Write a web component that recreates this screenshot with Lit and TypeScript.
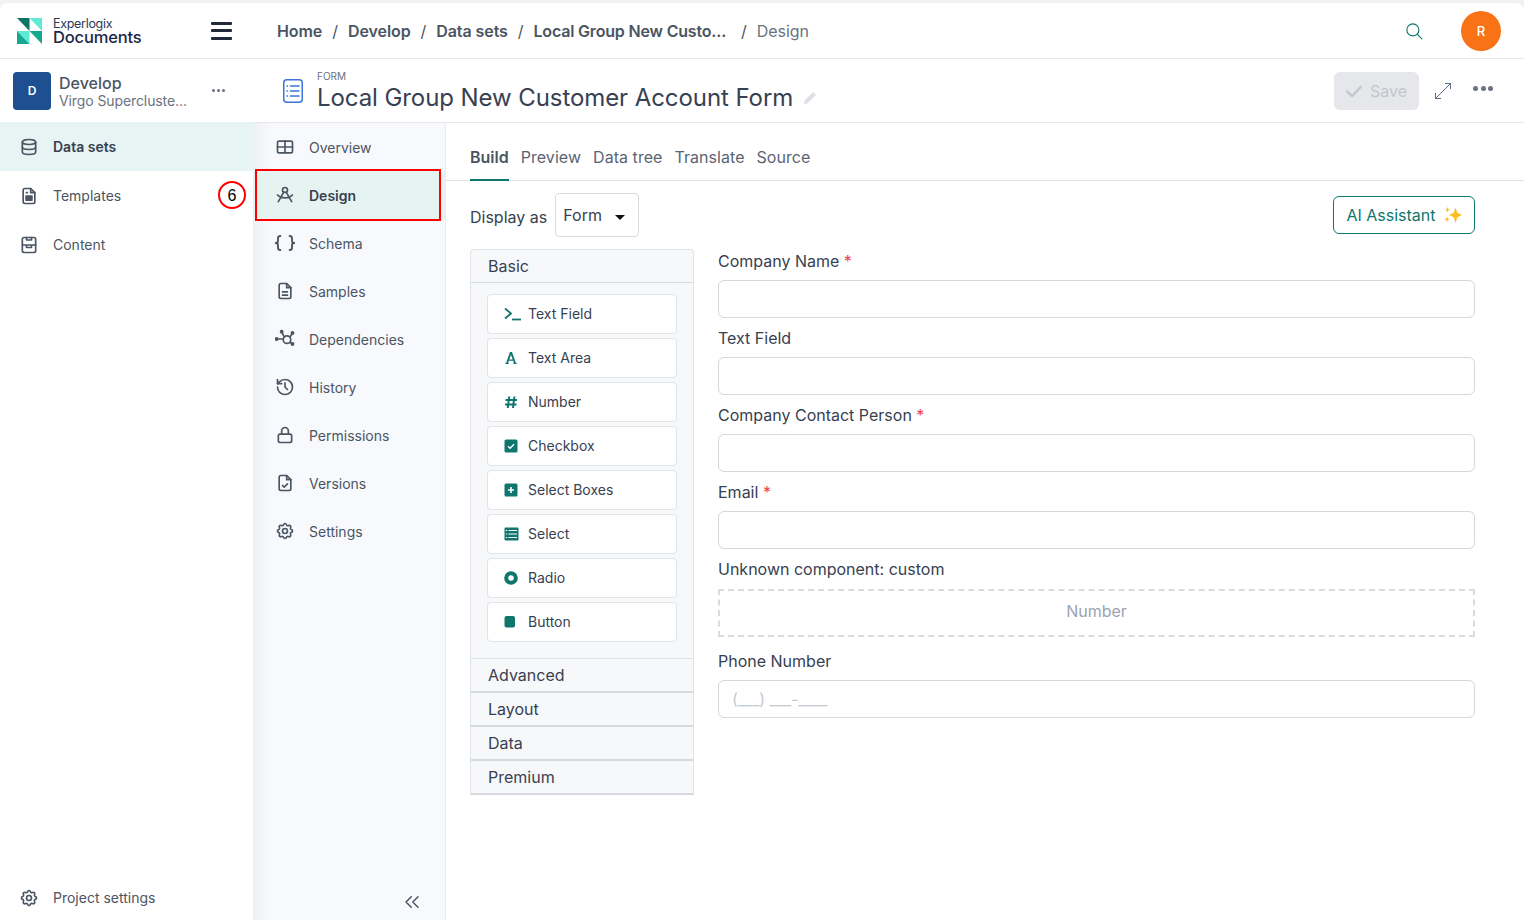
import { LitElement, html, css, svg } from "lit";
import { customElement } from "lit/decorators.js";

const I = (body: unknown, size = 20, sw = 2) => html`<svg width=${size} height=${size} viewBox="0 0 24 24" fill="none" stroke="currentColor" stroke-width=${sw} stroke-linecap="round" stroke-linejoin="round">${body}</svg>`;

const icons = {
  db: svg`<ellipse cx="12" cy="6" rx="8" ry="3"/><path d="M4 6v12c0 1.700 3.600 3 8 3s8-1.300 8-3V6"/><path d="M4 12c0 1.700 3.600 3 8 3s8-1.300 8-3"/>`,
  tpl: svg`<path d="M14 3H7a2 2 0 0 0-2 2v14a2 2 0 0 0 2 2h10a2 2 0 0 0 2-2V8z"/><path d="M14 3v5h5"/><path d="M9 8h1"/><rect x="8.500" y="12" width="7" height="5" fill="currentColor"/>`,
  content: svg`<rect x="4" y="3" width="16" height="18" rx="2"/><path d="M4 12h16M9 3v3h6V3M9 12v3h6v-3"/>`,
  gear: svg`<path d="M10.300 4.300c.4-1.800 3-1.800 3.400 0a1.700 1.700 0 0 0 2.600 1.100c1.500-.9 3.300.8 2.400 2.400a1.700 1.700 0 0 0 1 2.500c1.800.4 1.800 3 0 3.400a1.700 1.700 0 0 0-1 2.600c.9 1.500-.9 3.300-2.400 2.400a1.700 1.700 0 0 0-2.600 1c-.4 1.800-3 1.800-3.400 0a1.700 1.700 0 0 0-2.600-1c-1.500.9-3.300-.9-2.400-2.400a1.700 1.700 0 0 0-1-2.600c-1.800-.4-1.800-3 0-3.400a1.700 1.700 0 0 0 1-2.500c-.9-1.600.9-3.300 2.400-2.400a1.700 1.700 0 0 0 2.600-1.100z"/><circle cx="12" cy="12" r="3"/>`,
  overview: svg`<rect x="3" y="5" width="18" height="14" rx="2"/><path d="M3 12h18M12 5v14"/>`,
  design: svg`<circle cx="12" cy="6" r="3"/><path d="M10.500 8.500 4 20M13.500 8.500 20 20M3 12c4 4.500 14 4.500 18 0"/>`,
  schema: svg`<g transform="translate(-1.440 -1.440) scale(1.120)"><path d="M7 4.500c-2 0-2.500 1-2.500 2.500v2.500c0 1.500-1 2.500-2.500 2.500 1.500 0 2.500 1 2.500 2.500V17c0 1.500.5 2.500 2.500 2.500M17 4.500c2 0 2.500 1 2.500 2.500v2.500c0 1.500 1 2.500 2.500 2.500-1.500 0-2.500 1-2.500 2.500V17c0 1.500-.5 2.500-2.500 2.500"/></g>`,
  samples: svg`<path d="M14 3H7a2 2 0 0 0-2 2v14a2 2 0 0 0 2 2h10a2 2 0 0 0 2-2V8z"/><path d="M14 3v5h5M9 13h6M9 17h6"/>`,
  deps: svg`<circle cx="14.400" cy="12.800" r="4.500"/><path d="M2 12h8M11 9.500 8 3.500M18 9.500 21 5M18 16 21 18"/><circle cx="8" cy="3.200" r="1.300" fill="currentColor"/><circle cx="21" cy="4.800" r="1.300" fill="currentColor"/><circle cx="21" cy="18" r="1.300" fill="currentColor"/><circle cx="2" cy="12" r="1.300" fill="currentColor"/>`,
  history: svg`<path d="M3 12a9 9 0 1 0 9-9 9.750 9.750 0 0 0-6.740 2.740L3 8"/><path d="M3 3v5h5"/><path d="M12 7v5l3 3"/>`,
  lock: svg`<rect x="4" y="11" width="16" height="10" rx="2"/><path d="M8 11V7a4 4 0 0 1 8 0v4"/>`,
  versions: svg`<path d="M14 3H7a2 2 0 0 0-2 2v14a2 2 0 0 0 2 2h10a2 2 0 0 0 2-2V8z"/><path d="M14 3v5h5M9 15l2 2 4-4"/>`,
};

interface NavItem { icon: keyof typeof icons; label: string; active?: boolean }
const mainNav: NavItem[] = [
  { icon: "db", label: "Data sets", active: true },
  { icon: "tpl", label: "Templates" },
  { icon: "content", label: "Content" },
];
const subNav: NavItem[] = [
  { icon: "overview", label: "Overview" },
  { icon: "design", label: "Design", active: true },
  { icon: "schema", label: "Schema" },
  { icon: "samples", label: "Samples" },
  { icon: "deps", label: "Dependencies" },
  { icon: "history", label: "History" },
  { icon: "lock", label: "Permissions" },
  { icon: "versions", label: "Versions" },
  { icon: "gear", label: "Settings" },
];

const G = "#0f766e";
const palette = [
  { label: "Text Field", icon: html`<svg width="18" height="14" viewBox="0 0 18 14" fill="none" stroke=${G} stroke-width="1.800"><path d="M1 1.500 7 6.500 1 11.500"/><path d="M8 12.500h9"/></svg>` },
  { label: "Text Area", icon: html`<svg width="14" height="14" viewBox="0 0 14 14" fill=${G}><path d="M6 1h2l4 11.200 1 .3v.5H9v-.5l1-.3-.8-2.400H4.800L4 12.200l1 .3v.5H1v-.5l1-.3zM5.300 8.500h3.400L7 3.800z" fill-rule="evenodd"/></svg>` },
  { label: "Number", icon: html`<svg width="14" height="14" viewBox="0 0 14 14" fill="none" stroke=${G} stroke-width="2"><path d="M5.200 1.500 3.800 13M10.400 1.500 9 13M1.500 5h11.500M1 9.500h11.500"/></svg>` },
  { label: "Checkbox", icon: html`<svg width="14" height="14" viewBox="0 0 14 14"><rect x="0.500" y="0.500" width="13" height="13" rx="1.500" fill=${G}/><path d="M4 7.200 6.100 9.200l3.900-4" fill="none" stroke="#fff" stroke-width="1.400"/></svg>` },
  { label: "Select Boxes", icon: html`<svg width="14" height="14" viewBox="0 0 14 14"><rect x="0.500" y="0.500" width="13" height="13" rx="1.500" fill=${G}/><path d="M7 4v6M4 7h6" stroke="#fff" stroke-width="1.600"/></svg>` },
  { label: "Select", icon: html`<svg width="15" height="14" viewBox="0 0 15 14"><rect x="0.500" y="0.500" width="14" height="13" rx="1.200" fill=${G}/><path d="M4.500 3.500h8.500M4.500 7h8.500M4.500 10.500h8.500M1.800 3.500h1.500M1.800 7h1.500M1.800 10.500h1.500" stroke="#fff" stroke-width="1"/></svg>` },
  { label: "Radio", icon: html`<svg width="14" height="14" viewBox="0 0 14 14"><circle cx="7" cy="7" r="4.800" fill="#fff" stroke=${G} stroke-width="4"/></svg>` },
  { label: "Button", icon: html`<svg width="14" height="14" viewBox="0 0 14 14"><rect x="0.500" y="1" width="10.500" height="11.500" rx="2" fill=${G}/></svg>` },
];

const fields = [
  { label: "Company Name", req: true },
  { label: "Text Field" },
  { label: "Company Contact Person", req: true },
  { label: "Email", req: true },
];

@customElement("app-root")
export class AppRoot extends LitElement {
  static styles = css`
    :host { display: block; width: 1524px; height: 920px; overflow: hidden; background: #f1f2f4; font-family: Inter, "Liberation Sans", sans-serif; color: #374151; }
    * { box-sizing: border-box; }
    .shell { margin-top: 3px; height: 917px; background: #fff; border-radius: 8px 8px 0 0; display: grid; grid-template-columns: 253px 1fr; overflow: hidden; }
    .side { display: flex; flex-direction: column; background: #fff; position: relative; height: 917px; }
    .brand { height: 56px; border-bottom: 1px solid #e5e7eb; display: flex; align-items: center; padding: 0 21px 0 17px; }
    .brand-text { margin-left: 11px; display: flex; flex-direction: column; flex: 1; }
    .brand-a { font-size: 12.500px; line-height: 13px; letter-spacing: -0.300px; color: #2c3858; }
    .brand-b { font-size: 16.500px; line-height: 15px; font-weight: 500; letter-spacing: -0.150px; color: #1c2747; }
    .burger { width: 21px; height: 18px; display: flex; flex-direction: column; justify-content: space-between; }
    .burger i { display: block; height: 3px; background: #1f2937; border-radius: 1px; }
    .proj { height: 64px; margin-bottom: -1px; border-bottom: 1px solid #e9ebef; display: flex; align-items: center; padding: 0 13px; }
    .avatar { width: 38px; height: 38px; background: #1d4f91; border-radius: 4px; color: #fff; font-size: 12px; font-weight: 600; display: grid; place-items: center; }
    .proj-text { margin-left: 8px; flex: 1; display: flex; flex-direction: column; }
    .proj-a { font-size: 16px; line-height: 19px; font-weight: 500; color: #4b5563; margin: 1px 0 -1px; }
    .proj-b { font-size: 14px; line-height: 17px; color: #6b7280; letter-spacing: -0.100px; }
    .dots { display: flex; gap: 2px; margin-right: 15px; }
    .dots i { width: 3px; height: 3px; border-radius: 50%; background: #6b7280; display: block; }
    .nav { flex: 1; display: flex; flex-direction: column; }
    .nav a { height: 49px; display: flex; align-items: center; padding-left: 19px; gap: 14px; font-size: 14px; color: #4b5563; }
    .nav a.on { background: #e6f4f3; font-weight: 600; color: #374151; }
    .nav svg, .bottom svg { color: #4b5563; flex: none; }
    .bottom { height: 45px; display: flex; align-items: center; padding: 0 0 0 19px; gap: 14px; font-size: 14px; color: #4b5563; }
    .mark { position: absolute; left: 218px; top: 178px; width: 28px; height: 28px; border: 2px solid #f00; border-radius: 50%; display: grid; place-items: center; padding-top: 1px; font-size: 16px; color: #000; background: #fff; font-family: "Liberation Sans", sans-serif; }

    .right { display: flex; flex-direction: column; min-width: 0; height: 917px; }
    .crumbs { height: 56px; border-bottom: 1px solid #e5e7eb; display: flex; align-items: center; padding: 0 23px 0 24px; font-size: 16px; color: #4b5563; letter-spacing: -0.080px; }
    .crumbs b { font-weight: 600; }
    .crumbs b.long { letter-spacing: -0.180px; }
    .crumbs .sep { margin: 0 10px; font-weight: 400; color: #4b5563; }
    .crumbs .sep.wide { margin-left: 15px; }
    .crumbs .last { font-weight: 400; color: #6b7280; }
    .crumbs .spacer { flex: 1; }
    .search { color: #0f766e; margin-right: 38px; display: flex; }
    .user { width: 40px; height: 40px; border-radius: 50%; background: #f97316; color: #fff; font-size: 13px; font-weight: 500; display: grid; place-items: center; letter-spacing: 0; }
    .title-bar { height: 64px; border-bottom: 1px solid #e5e7eb; display: flex; align-items: center; padding: 0 31px 0 30px; }
    .form-ico { color: #3b74d8; display: flex; margin-right: 14px; }
    .title-box { display: flex; flex-direction: column; padding-top: 2px; }
    .kicker { font-size: 10px; line-height: 12px; color: #6b7280; margin-top: -2px; }
    .title { font-size: 24px; line-height: 28px; color: #374151; display: flex; align-items: center; gap: 10px; margin-top: 2px; letter-spacing: -0.080px; }
    .pencil { color: #dcdfe3; display: flex; }
    .title-spacer { flex: 1; }
    .save { width: 85px; height: 38px; background: #e5e7eb; border-radius: 6px; color: #c3c7cd; display: flex; align-items: center; justify-content: center; gap: 7px; font-size: 16px; margin-right: 16px; padding-right: 1px; }
    .expand { color: #5b6b85; display: flex; margin-right: 22px; }
    .more { display: flex; gap: 2.500px; margin-top: -4px; }
    .more i { width: 5px; height: 5px; border-radius: 50%; background: #6b7280; display: block; }

    .body { flex: 1; display: grid; grid-template-columns: 193px 1fr; min-height: 0; }
    .sub { position: relative; background: linear-gradient(90deg, #eef0f4 0, #f8f9fd 18px); border-right: 1px solid #e9ebf0; display: flex; flex-direction: column; }
    .sub-list { flex: 1; display: flex; flex-direction: column; }
    .sub-list a { height: 48px; display: flex; align-items: center; padding-left: 22px; gap: 14px; font-size: 14px; color: #4b5563; flex: none; }
    .sub-list a.on { background: #e6f4f1; font-weight: 600; color: #374151; }
    .sub-list svg { color: #4b5563; flex: none; }
    .redbox { position: absolute; left: 2px; top: 46px; width: 186px; height: 52px; border: 2px solid #f00; pointer-events: none; }
    .collapse { height: 36px; display: flex; justify-content: flex-end; align-items: center; padding-right: 24px; color: #4b5563; flex: none; }

    .main { display: flex; flex-direction: column; min-width: 0; }
    .tabs { height: 58px; border-bottom: 1px solid #e0e3e8; display: flex; align-items: flex-end; padding-left: 24px; gap: 12px; flex: none; }
    .tabs span { height: 46px; line-height: 24px; padding-top: 11px; font-size: 16px; color: #5b6472; letter-spacing: 0.050px; }
    .tabs .on { font-weight: 600; color: #4b5563; border-bottom: 2px solid #0f766e; margin-bottom: -1px; height: 47px; letter-spacing: 0; }
    .work { padding: 12px 49px 0 24px; display: flex; flex-direction: column; }
    .bar { display: flex; align-items: center; justify-content: space-between; height: 44px; }
    .disp { display: flex; align-items: center; gap: 8px; font-size: 16px; color: #374151; }
    .disp-label { margin-top: 4px; }
    .sel { width: 84px; height: 44px; border: 1px solid #d8dbe0; border-radius: 4px; display: flex; align-items: center; padding: 0 13px 0 7px; justify-content: space-between; color: #374151; }
    .caret { width: 0; height: 0; border-left: 5px solid transparent; border-right: 5px solid transparent; border-top: 5px solid #111; margin-top: 5px; }
    .ai { width: 142px; height: 38px; border: 1px solid #0f766e; border-radius: 6px; color: #0f766e; display: flex; align-items: center; justify-content: center; gap: 8px; font-size: 16px; background: #fff; }
    .cols { display: grid; grid-template-columns: 224px 1fr; gap: 24px; margin-top: 12px; }
    .panel { border: 1px solid #dfe2e7; border-bottom: 0; border-radius: 4px 4px 0 0; background: #f7f8fa; align-self: start; width: 224px; }
    .head { height: 34px; line-height: 33px; padding-left: 17px; font-size: 16px; color: #374151; background: #f7f8fa; border-bottom: 2px solid #d6d9df; }
    .panel .head:first-child { height: 33px; border-bottom-width: 1px; border-radius: 4px 4px 0 0; }
    .items { padding: 11px 16px 16px; display: flex; flex-direction: column; gap: 4px; border-bottom: 1px solid #dfe2e7; }
    .item { height: 40px; background: #fff; border: 1px solid #e0e3e8; border-radius: 4px; display: flex; align-items: center; padding-left: 16px; font-size: 14px; color: #374151; }
    .item-ico { width: 24px; display: flex; align-items: center; flex: none; }
    .item-txt { margin-top: -1px; }
    .form { display: flex; flex-direction: column; }
    .label { font-size: 16px; line-height: 24px; height: 31px; color: #374151; }
    .label.tall { height: 32px; }
    .req { color: #ef4444; }
    .input { height: 38px; border: 1px solid #d5d8de; border-radius: 6px; background: #fff; margin-bottom: 8px; font-size: 16px; color: #c4c9d2; display: flex; align-items: center; padding-left: 13px; letter-spacing: -0.100px; }
    .drop { height: 48px; border: 2px dashed #d8dbdf; display: grid; place-items: center; font-size: 16px; color: #9ca3af; margin-bottom: 12px; padding-bottom: 4px; }
  `;

  render() {
    return html`
      <div class="shell">
        <aside class="side">
          <div class="brand">
            <svg width="25" height="26" viewBox="0 0 25 26">
              <polygon points="0,0 12.500,0 12.500,13" fill="#0b7563"/>
              <polygon points="12.500,0 25,0 25,13" fill="#5eead4"/>
              <polygon points="0,13 12.500,13 12.500,26" fill="#5eead4"/>
              <polygon points="0,13 0,26 12.500,26" fill="#14a88f"/>
              <polygon points="12.500,13 25,13 25,26" fill="#14a88f"/>
            </svg>
            <div class="brand-text"><span class="brand-a">Experlogix</span><span class="brand-b">Documents</span></div>
            <div class="burger"><i></i><i></i><i></i></div>
          </div>
          <div class="proj">
            <div class="avatar">D</div>
            <div class="proj-text"><span class="proj-a">Develop</span><span class="proj-b">Virgo Superclust${"e"}...</span></div>
            <div class="dots"><i></i><i></i><i></i></div>
          </div>
          <nav class="nav">
            ${mainNav.map((n) => html`<a class=${n.active ? "on" : ""}>${I(icons[n.icon])}${n.label}</a>`)}
          </nav>
          <div class="bottom">${I(icons.gear)}Project settings</div>
          <div class="mark">6</div>
        </aside>
        <div class="right">
          <header class="crumbs">
            <b>Home</b><span class="sep">/</span><b>Develop</b><span class="sep">/</span><b>Data sets</b><span class="sep">/</span><b class="long">Local Group New Custo...</b><span class="sep wide">/</span><span class="last">Design</span>
            <span class="spacer"></span>
            <span class="search">${I(svg`<circle cx="10.500" cy="10.500" r="8"/><path d="M16.500 16.500l6 6"/>`, 18, 1.500)}</span>
            <div class="user">R</div>
          </header>
          <div class="title-bar">
            <span class="form-ico"><svg width="20" height="24" viewBox="0 0 20 24" fill="none" stroke="currentColor" stroke-width="1.500" stroke-linecap="round"><rect x="0.750" y="0.750" width="18.500" height="22.500" rx="3"/><path d="M7.500 7H16M7.500 12H16M7.500 17H16"/><path d="M4 7h.5M4 12h.5M4 17h.5"/></svg></span>
            <div class="title-box">
              <span class="kicker">FORM</span>
              <span class="title">Local Group New Customer Account Form
                <span class="pencil"><svg width="14" height="14" viewBox="0 0 14 14" fill="currentColor"><path d="M10 1l3 3-8.500 8.500L1 13l.5-3.500z"/></svg></span>
              </span>
            </div>
            <span class="title-spacer"></span>
            <div class="save">${I(svg`<path d="M3 12.500 9.500 19 21 6.500"/>`, 18, 3)}Save</div>
            <span class="expand"><svg width="16" height="16" viewBox="0 0 16 16" fill="none" stroke="currentColor" stroke-width="1"><path d="M.5 15.500 15.500.5M10 .5h5.500V6M.5 10v5.500H6"/></svg></span>
            <div class="more"><i></i><i></i><i></i></div>
          </div>
          <div class="body">
            <aside class="sub">
              <div class="sub-list">
                ${subNav.map((n) => html`<a class=${n.active ? "on" : ""}>${I(icons[n.icon])}${n.label}</a>`)}
              </div>
              <div class="redbox"></div>
              <div class="collapse">${I(svg`<path d="M11 5l-7 7 7 7M20 5l-7 7 7 7"/>`, 18)}</div>
            </aside>
            <main class="main">
              <div class="tabs">
                <span class="on">Build</span><span>Preview</span><span>Data tree</span><span>Translate</span><span>Source</span>
              </div>
              <div class="work">
                <div class="bar">
                  <div class="disp"><span class="disp-label">Display as</span><div class="sel">Form <span class="caret"></span></div></div>
                  <div class="ai">AI Assistant
                    <svg width="18" height="17" viewBox="0 0 18 17" fill="#fbbf24"><path d="M11.500 .5 13.300 5.700 18 8 13.300 10.300 11.500 16 9.700 10.300 5 8 9.700 5.700z"/><path d="M3.500 0 4.300 2 6 2.700 4.300 3.400 3.500 5.500 2.700 3.400 1 2.700 2.700 2z"/><path d="M3 9.500 3.800 11.500 5.500 12.200 3.800 12.900 3 15 2.200 12.900 .5 12.200 2.200 11.500z"/></svg>
                  </div>
                </div>
                <div class="cols">
                  <div class="panel">
                    <div class="head">Basic</div>
                    <div class="items">
                      ${palette.map((p) => html`<div class="item"><span class="item-ico">${p.icon}</span><span class="item-txt">${p.label}</span></div>`)}
                    </div>
                    ${["Advanced", "Layout", "Data", "Premium"].map((h) => html`<div class="head">${h}</div>`)}
                  </div>
                  <div class="form">
                    ${fields.map((f) => html`<div class="label">${f.label}${f.req ? html` <span class="req">*</span>` : ""}</div><div class="input"></div>`)}
                    <div class="label tall">Unknown component: custom</div>
                    <div class="drop">Number</div>
                    <div class="label">Phone Number</div>
                    <div class="input">(___) ___-____</div>
                  </div>
                </div>
              </div>
            </main>
          </div>
        </div>
      </div>
    `;
  }
}
